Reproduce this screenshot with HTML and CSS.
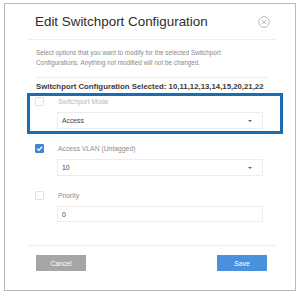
FILE: index.html
```html
<!DOCTYPE html>
<html>
<head>
  <title>Edit Switchport Configuration</title>
  <link rel="stylesheet" href="styles.css">
</head>
<body>
  <div class="frame">
    <div class="header">
      <h1 class="title">Edit Switchport Configuration</h1>
      <svg class="close" width="12" height="12" viewBox="0 0 12 12">
        <circle cx="6" cy="6" r="5.3" fill="none" stroke="#b0b0b0" stroke-width="0.9"/>
        <path d="M3.9 3.9 L8.1 8.1 M8.1 3.9 L3.9 8.1" stroke="#b0b0b0" stroke-width="0.9"/>
      </svg>
    </div>

    <div class="content">
      <div class="intro">
        <p>Select options that you want to modify for the selected Switchport Configurations. Anything not modified will not be changed.</p>
      </div>
      <p class="selected">Switchport Configuration Selected: 10,11,12,13,14,15,20,21,22</p>

      <!--the highlighted field-->
      <div class="field">
        <div class="field-head">
          <span class="check"></span>
          <span class="label disabled">Switchport Mode</span>
        </div>
        <div class="select">Access<span class="caret"></span></div>
      </div>

      <div class="field">
        <div class="field-head">
          <span class="check on">
            <svg width="9" height="9" viewBox="0 0 9 9"><path d="M2 4.6 L3.8 6.4 L7.1 2.7" fill="none" stroke="#fff" stroke-width="1.3"/></svg>
          </span>
          <span class="label">Access VLAN (Untagged)</span>
        </div>
        <div class="select">10<span class="caret"></span></div>
      </div>

      <div class="field">
        <div class="field-head">
          <span class="check"></span>
          <span class="label">Priority</span>
        </div>
        <div class="input">0</div>
      </div>
    </div>

    <div class="footer">
      <button class="btn cancel">Cancel</button>
      <button class="btn save">Save</button>
    </div>

    <div class="highlight"></div>
  </div>
</body>
</html>
```

FILE: styles.css
```css
* { box-sizing: border-box; }
body {
  margin: 0;
  background: #fff;
  font-family: "Liberation Sans", Arial, sans-serif;
}
.frame {
  position: relative;
  margin: 3px 0 0 4px;
  width: 292px;
  height: 288px;
  border: 1px solid #b8b8b8;
  background: #fff;
  padding: 0 19px 0 23px;
}
.header {
  display: flex;
  align-items: center;
  justify-content: space-between;
  height: 36px;
  padding: 0 6px 0 7px;
  border-bottom: 1px solid #eeeeee;
}
.title {
  margin: 0;
  font-size: 13.4px;
  font-weight: normal;
  color: #2e2e2e;
  white-space: nowrap;
}
.content {
  padding: 0 8px;
}
.intro {
  padding: 8px 0 9px;
  border-bottom: 1px solid #eeeeee;
}
.intro p {
  margin: 0;
  max-width: 205px;
  font-size: 6.4px;
  line-height: 10px;
  color: #8a8a8a;
}
.selected {
  margin: 0;
  padding-top: 3px;
  height: 17px;
  font-size: 7.8px;
  line-height: 12px;
  font-weight: bold;
  color: #3a3a3a;
  white-space: nowrap;
}
.field { margin-bottom: 13px; }
.field-head {
  display: flex;
  align-items: center;
  height: 12px;
  margin-bottom: 5px;
}
.check {
  display: flex;
  width: 9px;
  height: 9px;
  border: 1px solid #e2e2e2;
  border-radius: 1px;
  margin-left: -1px;
}
.check.on {
  background: #3f86cf;
  border-color: #3f86cf;
}
.check svg { margin: -1px; }
.label {
  margin-left: 14px;
  font-size: 6.8px;
  color: #8c8c8c;
}
.label.disabled { color: #b8b8b8; }
.select, .input {
  position: relative;
  margin-left: 21px;
  width: 206px;
  height: 17px;
  padding-left: 4px;
  border: 1px solid #ececec;
  font-size: 6.8px;
  line-height: 15px;
  color: #444;
}
.input { height: 16px; }
.caret {
  position: absolute;
  right: 10px;
  top: 7px;
  border-left: 2px solid transparent;
  border-right: 2px solid transparent;
  border-top: 2px solid #666;
}
.footer {
  display: flex;
  justify-content: space-between;
  margin-top: 23px;
  padding: 9px 9px 0 8px;
  border-top: 1px solid #eeeeee;
}
.btn {
  width: 50px;
  height: 16px;
  border: none;
  padding: 0;
  font-family: inherit;
  font-size: 6.8px;
  color: #fff;
}
.cancel { background: #a6a6a6; }
.save { background: #4a91dc; }
.highlight {
  position: absolute;
  left: 22px;
  top: 89px;
  width: 256px;
  height: 41px;
  border: 3px solid #1b6db3;
}
```
